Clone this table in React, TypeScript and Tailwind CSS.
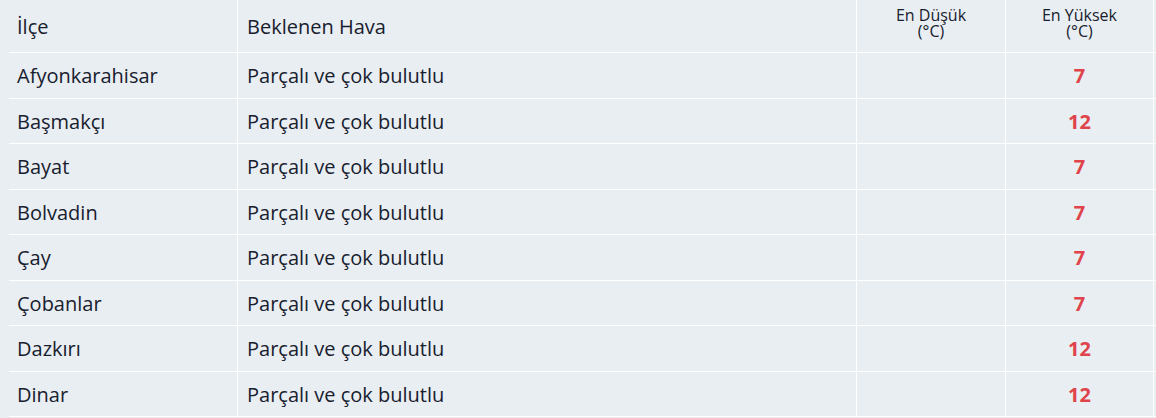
import React from 'react'

type Row = { ilce: string; hava: string; min: string; max: string }

const rows: Row[] = [
  { ilce: 'Afyonkarahisar', hava: 'Parçalı ve çok bulutlu', min: '', max: '7' },
  { ilce: 'Başmakçı', hava: 'Parçalı ve çok bulutlu', min: '', max: '12' },
  { ilce: 'Bayat', hava: 'Parçalı ve çok bulutlu', min: '', max: '7' },
  { ilce: 'Bolvadin', hava: 'Parçalı ve çok bulutlu', min: '', max: '7' },
  { ilce: 'Çay', hava: 'Parçalı ve çok bulutlu', min: '', max: '7' },
  { ilce: 'Çobanlar', hava: 'Parçalı ve çok bulutlu', min: '', max: '7' },
  { ilce: 'Dazkırı', hava: 'Parçalı ve çok bulutlu', min: '', max: '12' },
  { ilce: 'Dinar', hava: 'Parçalı ve çok bulutlu', min: '', max: '12' },
]

// column widths incl. right border line
const cols = 'grid grid-cols-[229px_619px_149px_148px]'

export default function App() {
  return (
    <div
      className="min-h-[418px] w-[1156px] bg-[#e8eef2] pl-[9px] text-[#18202e]"
      style={{ fontFamily: '"Open Sans", "Noto Sans", sans-serif' }}
    >
      {/* Header */}
      <div className={`${cols} h-[53px] border-b border-white`}>
        <div className="flex items-center border-r border-white pl-2 pt-px text-[20px]">İlçe</div>
        <div className="flex items-center border-r border-white pl-[9px] pt-px text-[20px]">Beklenen Hava</div>
        <div className="border-r border-white pt-[7px] text-center text-[16px] leading-[16px]">
          En Düşük
          <br />
          (°C)
        </div>
        <div className="border-r border-white pt-[7px] text-center text-[16px] leading-[16px]">
          En Yüksek
          <br />
          (°C)
        </div>
      </div>

      {/* Rows */}
      {rows.map((r) => (
        <div key={r.ilce} className={`${cols} h-[45.5px] border-b border-white`}>
          <div className="flex items-center border-r border-white pl-2 pt-[2px] text-[20px]">{r.ilce}</div>
          <div className="flex items-center border-r border-white pl-[9px] pt-[2px] text-[20px]">{r.hava}</div>
          <div className="flex items-center justify-center border-r border-white pt-[2px] text-[20px] font-bold text-[#e0434a]">
            {r.min}
          </div>
          <div className="flex items-center justify-center border-r border-white pt-[2px] text-[20px] font-bold text-[#e0434a]">
            {r.max}
          </div>
        </div>
      ))}
    </div>
  )
}
